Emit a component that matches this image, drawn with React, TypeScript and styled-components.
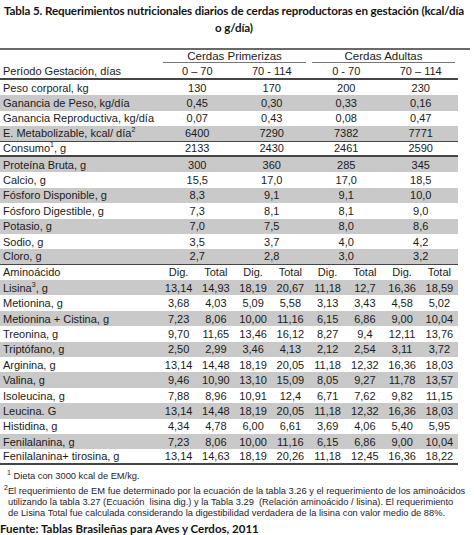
import React from 'react';
import styled, { createGlobalStyle } from 'styled-components';

const GlobalStyle = createGlobalStyle`
  body {
    margin: 0;
    background: #ffffff;
  }
`;

const Page = styled.div`
  width: 474px;
  height: 535px;
  overflow: hidden;
  color: #1b1b1b;
`;

const Title = styled.div`
  font-family: Lato, 'Open Sans', sans-serif;
  font-weight: 700;
  font-size: 11.6px;
  letter-spacing: -0.12px;
  line-height: 17px;
  text-align: center;
  color: #141414;
  padding: 2px 6px 0 0;
  height: 48px;
  box-sizing: border-box;
  white-space: nowrap;
`;

const TopRule = styled.div`
  width: 470px;
  height: 2px;
  background: #6a6a6a;
`;

const Table = styled.div`
  width: 458px;
  font-family: 'Liberation Sans', Arial, sans-serif;
  font-size: 11px;
`;

const Row = styled.div<{ $shade?: boolean; $line?: 'thin' | 'thick'; $h?: number }>`
  display: grid;
  grid-template-columns: 160px repeat(8, 1fr);
  align-items: center;
  box-sizing: border-box;
  height: ${(p) => p.$h ?? 15.4}px;
  background: ${(p) => (p.$shade ? '#c9c9c9' : '#ffffff')};
  border-bottom: ${(p) =>
    p.$line === 'thick' ? '2px solid #454545' : p.$line === 'thin' ? '1px solid #454545' : 'none'};
`;

const Label = styled.div`
  padding-left: 3px;
  white-space: nowrap;
`;

const Sup = styled.sup`
  font-size: 7px;
  line-height: 0;
`;

const Cell = styled.div<{ $span?: number }>`
  grid-column: span ${(p) => p.$span ?? 1};
  text-align: center;
  white-space: nowrap;
`;

const GroupCell = styled.div`
  grid-column: span 4;
  text-align: center;
  font-size: 11.5px;
  align-self: stretch;
  display: flex;
  align-items: center;
  justify-content: center;
  margin: 0 3px;
  border-bottom: 1px solid #777;
`;

const Notes = styled.div`
  font-family: 'Liberation Sans', Arial, sans-serif;
  font-size: 9.3px;
  line-height: 11px;
  color: #1d2230;
  padding: 6px 0 0 4px;
`;

const Note = styled.div<{ $indent?: number }>`
  padding-left: ${(p) => p.$indent ?? 0}px;
  white-space: nowrap;
`;

const NoteGap = styled.div`
  height: 4px;
`;

const Source = styled.div`
  font-family: Lato, 'Open Sans', sans-serif;
  font-weight: 700;
  font-size: 11.5px;
  line-height: 14px;
  color: #141414;
  padding-top: 3px;
`;

type Line = 'thin' | 'thick' | undefined;

const general: { label: React.ReactNode; v: string[]; shade?: boolean; line?: Line }[] = [
  { label: 'Peso corporal, kg', v: ['130', '170', '200', '230'] },
  { label: 'Ganancia de Peso, kg/día', v: ['0,45', '0,30', '0,33', '0,16'], shade: true },
  { label: 'Ganancia Reproductiva, kg/día', v: ['0,07', '0,43', '0,08', '0,47'] },
  {
    label: (
      <>
        E. Metabolizable, kcal/ día<Sup>2</Sup>
      </>
    ),
    v: ['6400', '7290', '7382', '7771'],
    shade: true,
    line: 'thin',
  },
  {
    label: (
      <>
        Consumo<Sup>1</Sup>, g
      </>
    ),
    v: ['2133', '2430', '2461', '2590'],
    line: 'thick',
  },
  { label: 'Proteína Bruta, g', v: ['300', '360', '285', '345'], shade: true },
  { label: 'Calcio, g', v: ['15,5', '17,0', '17,0', '18,5'] },
  { label: 'Fósforo Disponible, g', v: ['8,3', '9,1', '9,1', '10,0'], shade: true },
  { label: 'Fósforo Digestible, g', v: ['7,3', '8,1', '8,1', '9,0'] },
  { label: 'Potasio, g', v: ['7,0', '7,5', '8,0', '8,6'], shade: true },
  { label: 'Sodio, g', v: ['3,5', '3,7', '4,0', '4,2'] },
  { label: 'Cloro, g', v: ['2,7', '2,8', '3,0', '3,2'], shade: true, line: 'thin' },
];

const amino: { label: React.ReactNode; v: string[]; shade?: boolean; line?: Line }[] = [
  {
    label: (
      <>
        Lisina<Sup>3</Sup>, g
      </>
    ),
    v: ['13,14', '14,93', '18,19', '20,67', '11,18', '12,7', '16,36', '18,59'],
    shade: true,
  },
  { label: 'Metionina, g', v: ['3,68', '4,03', '5,09', '5,58', '3,13', '3,43', '4,58', '5,02'] },
  {
    label: 'Metionina + Cistina, g',
    v: ['7,23', '8,06', '10,00', '11,16', '6,15', '6,86', '9,00', '10,04'],
    shade: true,
  },
  { label: 'Treonina, g', v: ['9,70', '11,65', '13,46', '16,12', '8,27', '9,4', '12,11', '13,76'] },
  {
    label: 'Triptófano, g',
    v: ['2,50', '2,99', '3,46', '4,13', '2,12', '2,54', '3,11', '3,72'],
    shade: true,
  },
  { label: 'Arginina, g', v: ['13,14', '14,48', '18,19', '20,05', '11,18', '12,32', '16,36', '18,03'] },
  {
    label: 'Valina, g',
    v: ['9,46', '10,90', '13,10', '15,09', '8,05', '9,27', '11,78', '13,57'],
    shade: true,
  },
  { label: 'Isoleucina, g', v: ['7,88', '8,96', '10,91', '12,4', '6,71', '7,62', '9,82', '11,15'] },
  {
    label: 'Leucina. G',
    v: ['13,14', '14,48', '18,19', '20,05', '11,18', '12,32', '16,36', '18,03'],
    shade: true,
  },
  { label: 'Histidina, g', v: ['4,34', '4,78', '6,00', '6,61', '3,69', '4,06', '5,40', '5,95'] },
  {
    label: 'Fenilalanina, g',
    v: ['7,23', '8,06', '10,00', '11,16', '6,15', '6,86', '9,00', '10,04'],
    shade: true,
  },
  {
    label: 'Fenilalanina+ tirosina, g',
    v: ['13,14', '14,63', '18,19', '20,26', '11,18', '12,45', '16,36', '18,22'],
    line: 'thick',
  },
];

const App = () => {
  return (
    <Page>
      <GlobalStyle />
      <Title>
        Tabla 5. Requerimientos nutricionales diarios de cerdas reproductoras en gestación (kcal/día
        <br />o g/día)
      </Title>
      <TopRule />
      <Table>
        <Row $h={13}>
          <Label />
          <GroupCell>Cerdas Primerizas</GroupCell>
          <GroupCell>Cerdas Adultas</GroupCell>
        </Row>
        <Row $h={17} $line="thick">
          <Label>Período Gestación, días</Label>
          <Cell $span={2}>0 – 70</Cell>
          <Cell $span={2}>70 - 114</Cell>
          <Cell $span={2}>0 - 70</Cell>
          <Cell $span={2}>70 – 114</Cell>
        </Row>
        {general.map((r, i) => (
          <Row key={i} $shade={r.shade} $line={r.line}>
            <Label>{r.label}</Label>
            {r.v.map((x, j) => (
              <Cell key={j} $span={2}>
                {x}
              </Cell>
            ))}
          </Row>
        ))}
        <Row>
          <Label>Aminoácido</Label>
          {['Dig.', 'Total', 'Dig.', 'Total', 'Dig.', 'Total', 'Dig.', 'Total'].map((h, j) => (
            <Cell key={j}>{h}</Cell>
          ))}
        </Row>
        {amino.map((r, i) => (
          <Row key={i} $shade={r.shade} $line={r.line}>
            <Label>{r.label}</Label>
            {r.v.map((x, j) => (
              <Cell key={j}>{x}</Cell>
            ))}
          </Row>
        ))}
      </Table>
      <Notes>
        <Note $indent={3}>
          <Sup>1</Sup> Dieta con 3000 kcal de EM/kg.
        </Note>
        <NoteGap />
        <Note>
          <Sup>2</Sup>El requerimiento de EM fue determinado por la ecuación de la tabla 3.26 y el requerimiento de los aminoácidos
        </Note>
        <Note $indent={4}>
          utilizando la tabla 3.27 (Ecuación&nbsp; lisina dig.) y la Tabla 3.29&nbsp; (Relación aminoácido / lisina). El requerimiento
        </Note>
        <Note $indent={4}>
          de Lisina Total fue calculada considerando la digestibilidad verdadera de la lisina con valor medio de 88%.
        </Note>
      </Notes>
      <Source>Fuente: Tablas Brasileñas para Aves y Cerdos, 2011</Source>
    </Page>
  );
};

export default App;
